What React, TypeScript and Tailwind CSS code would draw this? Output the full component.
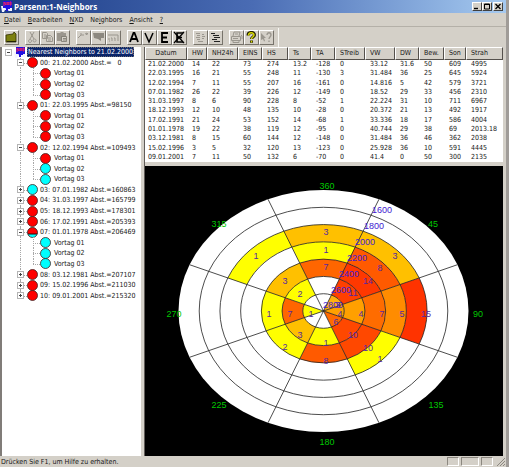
import type { ReactNode } from 'react';

const UI_FONT = "font-['DejaVu_Sans_Condensed','DejaVu_Sans',sans-serif]";

/* ---------- title and menu ---------- */

function NxdLogo() {
  return (
    <svg width="12" height="11" viewBox="0 0 12 11" aria-hidden="true" className="shrink-0">
      <path d="M0 5h3l2 2h6v3H8L6 9H4L3 11H1z" fill="#f4f4ff" />
      <rect x="2" y="0" width="9" height="7" fill="#2010e0" />
      <path d="M3 5V1l2 3V1M6 1l2 3M8 1L6 4M9 1v3h1V1z" stroke="#f02060" strokeWidth="1" fill="none" />
      <path d="M4 6h5v2H7v2H5V8z" fill="#2010e0" />
    </svg>
  );
}

function WindowButton({ label, children }: { label: string; children: ReactNode }) {
  return (
    <button
      aria-label={label}
      className="flex h-[9px] w-[10px] items-center justify-center border border-t-white border-l-white border-r-[#404040] border-b-[#404040] bg-[#d4d0c8]"
    >
      <svg width="8" height="7" viewBox="0 0 8 7" fill="none" stroke="#000" aria-hidden="true" className="shrink-0">
        {children}
      </svg>
    </button>
  );
}

function TitleBar() {
  return (
    <header className="flex h-[13px] shrink-0 items-center gap-[1px] bg-linear-to-r from-[#1c3c86] via-[#4a6cb4] to-[#a6caf0] pr-[3px] pl-[1px]">
      <NxdLogo />
      <h1 className="flex-1 font-['Open_Sans',sans-serif] text-[8px] leading-[12px] font-bold text-white">Parsenn:1-Neighbors</h1>
      <div className="flex">
        <WindowButton label="Minimieren">
          <path d="M1 5.5h4" strokeWidth="1.4" />
        </WindowButton>
        <WindowButton label="Maximieren">
          <path d="M1.5 1h5v5h-5zM1 1.5h6" />
        </WindowButton>
      </div>
      <WindowButton label="Schließen">
        <path d="M1.5 1l5 5M6.5 1l-5 5" strokeWidth="1.3" />
      </WindowButton>
    </header>
  );
}

const menus: [string, string, string][] = [
  ['', 'D', 'atei'],
  ['', 'B', 'earbeiten'],
  ['', 'N', 'XD'],
  ['Ne', 'i', 'ghbors'],
  ['', 'A', 'nsicht'],
  ['', '?', ''],
];

function MenuBar() {
  return (
    <nav className="flex h-[14px] shrink-0 items-center gap-[7px] border-b border-[#b4b0a8] pl-[4px]">
      {menus.map(([before, key, after]) => (
        <button key={key} className="text-[7px] leading-[12px]">
          {before}
          <span className="underline underline-offset-1">{key}</span>
          {after}
        </button>
      ))}
    </nav>
  );
}

/* ---------- tool bar ---------- */

const dim = '#9a968e';

const toolGroups: { label: string; icon: ReactNode }[][] = [
  [
    {
      label: 'Öffnen',
      icon: (
        <>
          <path d="M1 4l7-1 1-2 2 2v8H1z" fill="#7c8010" stroke="#303000" strokeWidth=".8" />
          <path d="M2 10.500h9" stroke="#202000" />
        </>
      ),
    },
  ],
  [
    { label: 'Ausschneiden', icon: <path d="M4 1l4 7M8 1L4 8M4 8.500a1.500 1.500 0 1 0 .1 0M8.500 8a1.500 1.500 0 1 0 .1 0" stroke={dim} fill="none" /> },
    { label: 'Kopieren', icon: <path d="M1.500 1.500h4l1 1v5h-5zM5.500 4.500h4l2 2v4h-6zM3 4h2M3 6h2M7 7h3M7 9h3" stroke={dim} fill="none" /> },
    {
      label: 'Einfügen',
      icon: (
        <>
          <path d="M1 2h3l1-1h2l1 1h2v8H1z" fill={dim} />
          <path d="M5.500 5.500h5v5h-5zM7 7.500h3M7 9h3" fill="#d4d0c8" stroke="#77736b" strokeWidth=".8" />
        </>
      ),
    },
  ],
  [
    { label: 'Verbinden', icon: <path d="M1 7l3-3M3 3h2v2M6 4h1M8 3l2-1v2M9 4l2-2" stroke={dim} fill="none" /> },
    { label: 'Gebiet', icon: <path d="M1 2h11v5H9v3L6 8 2 7z" fill="#8c8880" /> },
    { label: 'Profil', icon: <path d="M1 4h10v6M1 8h2M4 7h1v3M7 7h1v3M2 10h1" stroke={dim} fill="none" /> },
  ],
  [
    { label: 'A', icon: <path d="M2 11L5.500 2h1L10 11M3.500 8h5" stroke="#000" strokeWidth="1.800" fill="none" /> },
    { label: 'V', icon: <path d="M2 2l4 9 4-9" stroke="#000" strokeWidth="1.500" fill="none" /> },
    { label: 'E', icon: <path d="M10 2H4v9h6M4 6.500h5" stroke="#000" strokeWidth="1.800" fill="none" /> },
    {
      label: 'E aus',
      icon: (
        <>
          <path d="M10 2H4v9h6M4 6.500h5" stroke="#000" strokeWidth="1.600" fill="none" />
          <path d="M1 1l10 11M11 1L1 12" stroke="#000" strokeWidth="1.200" />
        </>
      ),
    },
  ],
  [
    { label: 'Liste', icon: <path d="M2 2.500h4M3 4.500h3M2 6.500h4M3 8.500h3M4 10.500h5M8 3.500h2M8 5.500h3M8 7.500h2" stroke={dim} fill="none" /> },
    { label: 'Struktur', icon: <path d="M2 2.500h4M4 4.500h6M5 6.500h6M3 8.500h5M5 10.500h6" stroke="#222" strokeWidth="1.200" fill="none" /> },
  ],
  [
    {
      label: 'Drucken',
      icon: <path d="M3 5l1-4h6L9 5M1.500 5.500h9v4h-9zM3 9.500v2h6v-2M11 4l1 1v3M5 3h3M3 7.500h5" stroke={dim} fill="none" />,
    },
    {
      label: 'Hilfe',
      icon: (
        <>
          <path d="M3 4.500C3 .5 9.500.5 9.500 4c0 2-3 2-3 4M6.500 9.500v2.200" stroke="#202000" strokeWidth="3" fill="none" />
          <path d="M3.500 4.500C3.500 1 9 1 9 4c0 2-2.500 2-2.500 4M6.500 9.700v1.800" stroke="#d8d800" strokeWidth="1.500" fill="none" />
        </>
      ),
    },
    {
      label: 'Kontexthilfe',
      icon: (
        <>
          <path d="M1 2l5 5H4l1 3-1 .5L3 8 1 9z" fill={dim} />
          <path d="M7 4c0-3 4-3 4 0 0 1.500-2 2-2 4M9 9.500V11" stroke={dim} strokeWidth="1.300" fill="none" />
        </>
      ),
    },
  ],
];

function ToolBar() {
  return (
    <div role="toolbar" aria-label="Werkzeuge" className="flex h-[20px] shrink-0 items-center pt-[1px] pl-[4px]">
      <div className="flex h-full items-center gap-[6px] border-r border-[#f8f8f4] pr-[4px]">
        {toolGroups.map((group) => (
          <div key={group[0].label} className="flex">
            {group.map((tool) => (
              <button
                key={tool.label}
                aria-label={tool.label}
                className="h-[15px] w-[15px] border border-t-white border-l-white border-r-[#77736b] border-b-[#77736b]"
              >
                <svg width="13" height="13" viewBox="0 0 13 13" aria-hidden="true">
                  {tool.icon}
                </svg>
              </button>
            ))}
          </div>
        ))}
      </div>
    </div>
  );
}

/* ---------- tree ---------- */

type Fill = 'red' | 'cyan' | 'mixed';
type Day = { label: string; fill: Fill; open?: Fill };

const days: Day[] = [
  { label: '00: 21.02.2000 Abst.=   0', fill: 'red', open: 'red' },
  { label: '01: 22.03.1995 Abst.=98150', fill: 'red', open: 'red' },
  { label: '02: 12.02.1994 Abst.=109493', fill: 'red', open: 'mixed' },
  { label: '03: 07.01.1982 Abst.=160863', fill: 'cyan' },
  { label: '04: 31.03.1997 Abst.=165799', fill: 'red' },
  { label: '05: 18.12.1993 Abst.=178301', fill: 'red' },
  { label: '06: 17.02.1991 Abst.=205393', fill: 'red' },
  { label: '07: 01.01.1978 Abst.=206469', fill: 'mixed', open: 'cyan' },
  { label: '08: 03.12.1981 Abst.=207107', fill: 'red' },
  { label: '09: 15.02.1996 Abst.=211030', fill: 'red' },
  { label: '10: 09.01.2001 Abst.=215320', fill: 'red' },
];

function Dot({ fill }: { fill: Fill }) {
  return (
    <svg width="11" height="11" viewBox="0 0 11 11" aria-hidden="true" className="relative shrink-0">
      <circle cx="5.5" cy="5.5" r="5" fill={fill === 'red' ? '#f00' : '#0ff'} />
      {fill === 'mixed' && <path d="M.5 5.500a5 5 0 0 1 10 0v1.500H.8z" fill="#f00" />}
      {fill === 'mixed' && <path d="M1 7h9" stroke="#300" />}
      <circle cx="5.5" cy="5.5" r="5" fill="none" stroke="#402020" strokeWidth=".8" />
    </svg>
  );
}

function Expander({ open }: { open: boolean }) {
  return (
    <button aria-label={open ? 'Zuklappen' : 'Aufklappen'} className="relative flex h-[7px] w-[7px] items-center justify-center border border-[#b4b4b4] bg-white">
      <svg width="5" height="5" viewBox="0 0 5 5" stroke="#444" aria-hidden="true" className="shrink-0">
        <path d={open ? 'M1 2.500h3' : 'M1 2.500h3M2.500 1v3'} />
      </svg>
    </button>
  );
}

function Guide({ last, children }: { last?: boolean; children?: ReactNode }) {
  return (
    <span className="relative flex w-[13px] shrink-0 items-center justify-center self-stretch">
      <span className={last ? 'absolute top-0 bottom-1/2 left-[6px] border-l border-dotted border-[#a8a8a8]' : 'absolute inset-y-0 left-[6px] border-l border-dotted border-[#a8a8a8]'} />
      <span className="absolute top-1/2 right-0 left-[6px] border-t border-dotted border-[#a8a8a8]" />
      {children}
    </span>
  );
}

function Rail() {
  return (
    <span className="relative w-[13px] shrink-0 self-stretch">
      <span className="absolute inset-y-0 left-[6px] border-l border-dotted border-[#a8a8a8]" />
    </span>
  );
}

const row = 'flex items-center whitespace-pre text-[7px] leading-[10px]';

function Tree() {
  return (
    <ul className="grid h-[254px] auto-rows-fr">
      <li className={row}>
        <span className="flex w-[12px] justify-center">
          <Expander open />
        </span>
        <NxdLogo />
        <span className="ml-[1px] bg-[#0a246a] px-[1px] text-white outline-dotted outline-1 -outline-offset-1 outline-[#6a6a70]">Nearest Neighbors to 21.02.2000</span>
      </li>
      {days.flatMap((day, i) => [
        <li key={day.label} className={`${row} pl-[12px]`}>
          <Guide last={i === days.length - 1}>
            <Expander open={!!day.open} />
          </Guide>
          <Dot fill={day.fill} />
          <span className="ml-[2px]">{day.label}</span>
        </li>,
        ...(day.open
          ? [1, 2, 3].map((n) => (
              <li key={`${day.label}-${n}`} className={`${row} pl-[12px]`}>
                <Rail />
                <Guide last={n === 3} />
                <Dot fill={day.open === 'mixed' ? (n === 1 ? 'red' : 'cyan') : day.open!} />
                <span className="ml-[3px]">Vortag 0{n}</span>
              </li>
            ))
          : []),
      ])}
    </ul>
  );
}

/* ---------- table ---------- */

const columns: [string, string][] = [
  ['Datum', 'w-[42px]'],
  ['HW', 'w-[20px]'],
  ['NH24h', 'w-[31px]'],
  ['EINS', 'w-[24px]'],
  ['HS', 'w-[26px]'],
  ['Ts', 'w-[23px]'],
  ['TA', 'w-[24px]'],
  ['STreib', 'w-[30px]'],
  ['VW', 'w-[30px]'],
  ['DW', 'w-[24px]'],
  ['Bew.', 'w-[25px]'],
  ['Son', 'w-[22px]'],
  ['Strah', ''],
];

const records = [
  '21.02.2000 14 22 73 274 13.2 -128 0 33.12 31.6 50 609 4995',
  '22.03.1995 16 21 55 248 11 -130 3 31.484 36 25 645 5924',
  '12.02.1994 7 11 55 207 16 -161 0 14.816 5 42 579 3721',
  '07.01.1982 26 22 39 226 12 -149 0 18.52 29 33 456 2310',
  '31.03.1997 8 6 90 228 8 -52 1 22.224 31 10 711 6967',
  '18.12.1993 12 10 48 135 10 -28 0 20.372 21 13 492 1917',
  '17.02.1991 21 24 53 152 14 -68 1 33.336 18 17 586 4004',
  '01.01.1978 19 22 38 119 12 -95 0 40.744 29 38 69 2013.18',
  '03.12.1981 8 15 60 144 12 -148 0 31.484 36 46 362 2038',
  '15.02.1996 3 5 32 120 13 -123 0 25.928 36 10 591 4445',
  '09.01.2001 7 11 50 132 6 -70 0 41.4 0 50 300 2135',
].map((line) => line.split(' '));

function NeighborTable() {
  return (
    <table className="h-[115px] w-full table-fixed border-separate border-spacing-0 text-left text-[7px] leading-[9px]">
      <thead>
        <tr className="h-[13px]">
          {columns.map(([name, width]) => (
            <th
              key={name}
              scope="col"
              className={`${width} border border-t-white border-l-white border-r-[#55514c] border-b-[#55514c] bg-[#d4d0c8] py-0 pr-0 pl-[4px] font-normal first:pr-[4px] first:text-center`}
            >
              {name}
            </th>
          ))}
        </tr>
      </thead>
      <tbody>
        {records.map((cells) => (
          <tr key={cells[0]}>
            {cells.map((cell, i) => (
              <td key={columns[i][0]} className="py-0 pr-0 pl-[5px] first:pl-[3px]">
                {cell}
              </td>
            ))}
          </tr>
        ))}
      </tbody>
    </table>
  );
}

/* ---------- wind rose ---------- */

const CX = 178.5;
const CY = 145;
const RX = 145;
const RY = 121;
const RINGS = 7;

const yellow = '#ffff00';
const amber = '#ffc000';

// One list for each sector, clockwise from north; each entry is the fill of a ring, from the centre outwards.
const sectors: string[][] = [
  ['#fff', '#fff', '#ff6600', yellow, amber],
  ['#ffb010', '#ff4000', '#ff3800', '#ff5a00', amber],
  ['#ffa000', '#ffa000', '#ff6c00', '#ff8c00', '#ff3300'],
  ['#ff6a00', '#ff4800', '#ff4800', yellow],
  ['#fff', yellow, '#ff5a00'],
  ['#fff', amber, yellow],
  [yellow, '#ff6600', yellow],
  ['#fff', yellow, amber, '#fff', yellow],
];

function point(ring: number, degrees: number) {
  const a = (degrees * Math.PI) / 180;
  const k = ring / RINGS;
  return `${(CX + RX * k * Math.sin(a)).toFixed(2)} ${(CY - RY * k * Math.cos(a)).toFixed(2)}`;
}

function cellPath(ring: number, sector: number) {
  const from = sector * 45 - 22.5;
  const to = from + 45;
  const outer = `${(RX * (ring + 1)) / RINGS} ${(RY * (ring + 1)) / RINGS}`;
  const inner = `${(RX * ring) / RINGS} ${(RY * ring) / RINGS}`;
  const back = ring === 0 ? '' : `A${inner} 0 0 0 ${point(ring, from)}`;
  return `M${point(ring, from)}L${point(ring + 1, from)}A${outer} 0 0 1 ${point(ring + 1, to)}L${point(ring, to)}${back}Z`;
}

type Label = [string, number, number];

const bearings: Label[] = [
  ['360', 182, 20], ['45', 288, 58], ['90', 333, 148], ['135', 291, 239],
  ['180', 182, 276], ['225', 74, 239], ['270', 29, 148], ['315', 74, 58],
];

const altitudes: Label[] = [
  ['1600', 237, 44], ['1800', 229, 60], ['2000', 220, 76], ['2200', 212, 92],
  ['2400', 204, 108], ['2600', 196, 124], ['2800', 188, 139],
];

const counts: Label[] = [
  ['3', 181, 66], ['1', 181, 84], ['7', 181, 101],
  ['3', 250, 90], ['8', 235, 102], ['14', 223, 115], ['11', 208, 127], ['3', 193, 139],
  ['4', 195, 148], ['4', 216, 148], ['7', 237, 148], ['5', 257, 148], ['15', 281, 148],
  ['6', 191, 156], ['10', 208, 169], ['10', 223, 182], ['1', 235, 193],
  ['1', 181, 177], ['8', 181, 195],
  ['3', 155, 169], ['2', 140, 181],
  ['1', 166, 148], ['7', 145, 148], ['1', 124, 148],
  ['2', 155, 128], ['3', 140, 115], ['1', 111, 90],
];

function Labels({ items, fill }: { items: Label[]; fill: string }) {
  return (
    <g fill={fill} textAnchor="middle">
      {items.map(([text, x, y]) => (
        <text key={`${text}-${x}-${y}`} x={x} y={y + 3}>
          {text}
        </text>
      ))}
    </g>
  );
}

function WindRose() {
  return (
    <svg
      viewBox="0 0 358 290"
      role="img"
      aria-label="Windrose"
      className="h-full w-full font-['Liberation_Sans',sans-serif] text-[9px]"
    >
      <ellipse cx={CX} cy={CY} rx={RX} ry={RY} fill="#fff" />
      {sectors.map((fills, s) => fills.map((fill, r) => <path key={`${s}-${r}`} d={cellPath(r, s)} fill={fill} />))}
      <g fill="none" stroke="#202020" strokeWidth=".8">
        {[1, 2, 3, 4, 5, 6].map((r) => (
          <ellipse key={r} cx={CX} cy={CY} rx={(RX * r) / RINGS} ry={(RY * r) / RINGS} />
        ))}
        {[0, 1, 2, 3].map((s) => (
          <path key={s} d={`M${point(RINGS, s * 45 + 22.5)}L${point(RINGS, s * 45 + 202.5)}`} />
        ))}
      </g>
      <Labels items={counts} fill="#5428a0" />
      <Labels items={altitudes} fill="#4020d0" />
      <Labels items={bearings} fill="#00c800" />
    </svg>
  );
}

/* ---------- window ---------- */

export default function App() {
  return (
    <div className={`flex h-screen flex-col overflow-hidden bg-[#d4d0c8] text-[#181818] ${UI_FONT}`}>
      <div className="flex min-h-0 flex-1 flex-col border-r-3 border-[#a09c98]">
        <TitleBar />
        <MenuBar />
        <ToolBar />
        <main className="flex min-h-0 flex-1 pr-[3px]">
          <aside className="w-[141px] shrink-0 overflow-hidden border-l-2 border-[#807c78] bg-white">
            <Tree />
          </aside>
          <div className="ml-[3px] flex min-w-0 flex-1 flex-col border-l border-[#605c58]">
            <section className="shrink-0 bg-white">
              <NeighborTable />
            </section>
            <section className="mt-[4px] min-h-0 flex-1 bg-black">
              <WindRose />
            </section>
          </div>
        </main>
        <footer className="flex h-[11px] shrink-0 items-center gap-[2px] pr-[1px] pl-[1px]">
          <p className="flex-1 text-[7px] leading-[10px]">Drücken Sie F1, um Hilfe zu erhalten.</p>
          <span className="h-[9px] w-[12px] border border-t-[#8c8880] border-l-[#8c8880] border-r-white border-b-white" />
          <span className="h-[9px] w-[18px] border border-t-[#8c8880] border-l-[#8c8880] border-r-white border-b-white" />
          <span className="h-[9px] w-[12px] border border-t-[#8c8880] border-l-[#8c8880] border-r-white border-b-white" />
          <svg width="10" height="9" viewBox="0 0 10 9" stroke="#8c8880" aria-hidden="true">
            <path d="M2 9l8-8M5 9l5-5M8 9l2-2" />
          </svg>
        </footer>
      </div>
    </div>
  );
}
